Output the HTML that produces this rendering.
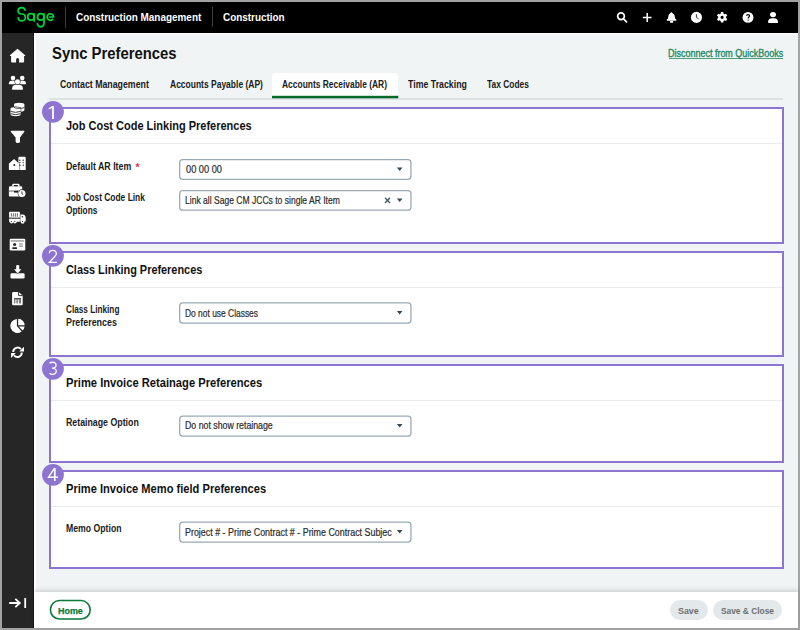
<!DOCTYPE html>
<html><head><meta charset="utf-8"><style>
*{margin:0;padding:0;box-sizing:border-box}
html,body{width:800px;height:630px;overflow:hidden;background:#a3a3a3;font-family:"Liberation Sans",sans-serif}
.t{position:absolute;white-space:nowrap;transform-origin:0 0}
.ic{position:absolute;overflow:visible}
#hdr{position:absolute;left:2px;top:2px;width:796px;height:31px;background:#000}
#side{position:absolute;left:2px;top:33px;width:32px;height:595px;background:#262626}
#main{position:absolute;left:34px;top:33px;width:764px;height:595px;background:#f0f4f4;border-left:2px solid #fff;border-top:1px solid #fff;box-shadow:inset 0 1px 0 #f8fafa}
.div{position:absolute;width:1px;background:#3d3d3d}
#tabline{position:absolute;left:49px;top:98px;width:734px;height:2px;background:#dde2e5}
#acttab{position:absolute;left:272px;top:73px;width:126px;height:25px;background:#fff;border-radius:3px 3px 0 0}
#actbar{position:absolute;left:272px;top:96px;width:126px;height:3px;background:#05692a}
.sec{position:absolute;left:49px;width:735px;background:#fff;border:2px solid #8d74d0}
.sep{position:absolute;left:51px;width:731px;height:1px;background:#e9edef}
.num{position:absolute;width:22px;height:22px;border-radius:50%;background:#8d74d0;color:#fff;font-size:16px;line-height:22px;text-align:center;font-weight:400}
.sel{position:absolute;left:179.4px;width:232.4px;background:#fff;border:1px solid #8d9da8;border-radius:3px}
#foot{position:absolute;left:34px;top:592px;width:764px;height:36px;background:#fff;box-shadow:0 -2px 4px rgba(0,0,0,0.14)}
.btn{position:absolute;border-radius:11px}
</style></head><body>
<div id="hdr"></div>
<div id="side"></div>
<div id="main"></div>
<div style="position:absolute;left:33px;top:33px;width:1px;height:595px;background:#161616"></div>
<div class="div" style="left:65px;top:7px;height:21px"></div>
<div class="div" style="left:212px;top:7px;height:20px"></div>
<div id="tabline"></div>
<div id="acttab"></div>
<svg class="ic" style="left:0;top:0" width="800" height="630"><rect x="272" y="95.8" width="126.3" height="2.5" fill="#05692a"/></svg>
<div style="position:absolute;left:668.8px;top:57.6px;width:114px;height:1px;background:#4f9f7c"></div>
<div class="sec" style="top:107px;height:137px"></div><div class="sep" style="top:143px"></div><svg class="ic" style="left:0;top:0" width="800" height="630"><g transform="translate(52.95,111.8)"><circle r="10.9" fill="#8d74d0"/><path fill="#fff" d="M0.95,-5.85 L0.95,7.15 L-0.85,7.15 L-0.85,-3.7 L-4.3,-2.2 L-4.3,-3.6 L-0.7,-5.85 Z"/></g></svg><div class="sec" style="top:251px;height:106px"></div><div class="sep" style="top:287px"></div><svg class="ic" style="left:0;top:0" width="800" height="630"><g transform="translate(52.95,255.8)"><circle r="10.9" fill="#8d74d0"/><path fill="none" stroke="#fff" stroke-width="1.3" d="M-3.6,-2.6 C-3.6,-4.4 -2.2,-5.35 -0.1,-5.35 C2.0,-5.35 3.4,-4.2 3.4,-2.4 C3.4,-0.9 2.6,0.2 1.2,1.5 L-3.6,6.55 H4.1"/></g></svg><div class="sec" style="top:364px;height:99px"></div><div class="sep" style="top:400px"></div><svg class="ic" style="left:0;top:0" width="800" height="630"><g transform="translate(52.95,368.8)"><circle r="10.9" fill="#8d74d0"/><path fill="none" stroke="#fff" stroke-width="1.3" d="M-3.5,-5.6 C-2.8,-6.3 -1.5,-6.55 -0.3,-6.55 C1.9,-6.55 3.1,-5.4 3.1,-3.6 C3.1,-1.7 1.6,-0.8 -0.8,-0.8 C1.9,-0.8 3.3,0.5 3.3,2.5 C3.3,4.5 1.8,5.55 -0.4,5.55 C-1.7,5.55 -2.9,5.1 -3.5,4.3"/></g></svg><div class="sec" style="top:470px;height:99px"></div><div class="sep" style="top:506px"></div><svg class="ic" style="left:0;top:0" width="800" height="630"><g transform="translate(52.95,474.8)"><circle r="10.9" fill="#8d74d0"/><path fill="none" stroke="#fff" stroke-width="1.4" d="M1.2,-6.1 L-4.4,2.4 H5"/><path fill="#fff" d="M1.0,-6.8 H2.7 V6.2 H1.0 Z"/></g></svg>
<svg class="ic" style="left:0;top:0" width="800" height="630"><rect x="179.70" y="159.65" width="231.25" height="19.70" rx="3" fill="#fff" stroke="#9aabb6" stroke-width="1.3"/><path d="M396.9,167.50 H402.5 L399.7,171.00 Z" fill="#2f4a59"/><rect x="179.70" y="190.65" width="231.25" height="19.50" rx="3" fill="#fff" stroke="#9aabb6" stroke-width="1.3"/><path d="M396.9,198.40 H402.5 L399.7,201.90 Z" fill="#2f4a59"/><path d="M385,197.80 L390,203.00 M390,197.80 L385,203.00" stroke="#34566b" stroke-width="1.25"/><rect x="179.70" y="302.95" width="231.25" height="20.10" rx="3" fill="#fff" stroke="#9aabb6" stroke-width="1.3"/><path d="M396.9,311.00 H402.5 L399.7,314.50 Z" fill="#2f4a59"/><rect x="179.70" y="416.15" width="231.25" height="19.90" rx="3" fill="#fff" stroke="#9aabb6" stroke-width="1.3"/><path d="M396.9,424.10 H402.5 L399.7,427.60 Z" fill="#2f4a59"/><rect x="179.70" y="522.15" width="231.25" height="19.90" rx="3" fill="#fff" stroke="#9aabb6" stroke-width="1.3"/><path d="M396.9,530.10 H402.5 L399.7,533.60 Z" fill="#2f4a59"/></svg>
<div id="foot"></div>
<svg class="ic" style="left:0;top:0" width="800" height="630"><rect x="50.4" y="600.55" width="39.8" height="18.5" rx="9.25" fill="none" stroke="#0a7a3a" stroke-width="1.6"/></svg>
<div class="btn" style="left:670.2px;top:600px;width:37.4px;height:20px;background:#e3e8eb"></div>
<div class="btn" style="left:713px;top:600px;width:69.2px;height:20px;background:#e3e8eb"></div>
<div class="t" style="left:135.4px;top:161.5px;font-size:10.5px;line-height:10px;color:#d33a4f;font-weight:700">*</div>
<div class="t" style="left:76.00px;top:12.30px;font-size:11px;line-height:11px;font-weight:700;color:#fff;transform:scaleX(0.9029);">Construction Management</div><div class="t" style="left:223.40px;top:12.30px;font-size:11px;line-height:11px;font-weight:700;color:#fff;transform:scaleX(0.9000);">Construction</div><div class="t" style="left:51.67px;top:46.00px;font-size:16px;line-height:16px;font-weight:700;color:#111;transform:scaleX(0.9278);">Sync Preferences</div><div class="t" style="left:60.25px;top:80.00px;font-size:10px;line-height:10px;font-weight:700;color:#1b1b1b;transform:scaleX(0.8787);">Contact Management</div><div class="t" style="left:169.70px;top:80.00px;font-size:10px;line-height:10px;font-weight:700;color:#1b1b1b;transform:scaleX(0.8486);">Accounts Payable (AP)</div><div class="t" style="left:282.40px;top:80.00px;font-size:10px;line-height:10px;font-weight:700;color:#1b1b1b;transform:scaleX(0.8435);">Accounts Receivable (AR)</div><div class="t" style="left:407.70px;top:80.00px;font-size:10px;line-height:10px;font-weight:700;color:#1b1b1b;transform:scaleX(0.8776);">Time Tracking</div><div class="t" style="left:486.80px;top:80.00px;font-size:10px;line-height:10px;font-weight:700;color:#1b1b1b;transform:scaleX(0.8400);">Tax Codes</div><div class="t" style="left:667.90px;top:48.50px;font-size:10px;line-height:10px;font-weight:400;color:#1f8a6a;transform:scaleX(0.8976);-webkit-text-stroke:0.35px #1f8a6a;">Disconnect from QuickBooks</div><div class="t" style="left:66.00px;top:120.20px;font-size:12px;line-height:12px;font-weight:700;color:#111;transform:scaleX(0.9158);">Job Cost Code Linking Preferences</div><div class="t" style="left:65.80px;top:264.30px;font-size:12px;line-height:12px;font-weight:700;color:#111;transform:scaleX(0.9080);">Class Linking Preferences</div><div class="t" style="left:65.77px;top:376.50px;font-size:12px;line-height:12px;font-weight:700;color:#111;transform:scaleX(0.9306);">Prime Invoice Retainage Preferences</div><div class="t" style="left:65.57px;top:482.90px;font-size:12px;line-height:12px;font-weight:700;color:#111;transform:scaleX(0.9260);">Prime Invoice Memo field Preferences</div><div class="t" style="left:65.62px;top:162.00px;font-size:10px;line-height:10px;font-weight:700;color:#1b1b1b;transform:scaleX(0.8808);">Default AR Item</div><div class="t" style="left:66.00px;top:192.80px;font-size:10px;line-height:10px;font-weight:700;color:#1b1b1b;transform:scaleX(0.8404);">Job Cost Code Link</div><div class="t" style="left:66.00px;top:205.70px;font-size:10px;line-height:10px;font-weight:700;color:#1b1b1b;transform:scaleX(0.8289);">Options</div><div class="t" style="left:66.00px;top:305.20px;font-size:10px;line-height:10px;font-weight:700;color:#1b1b1b;transform:scaleX(0.8215);">Class Linking</div><div class="t" style="left:65.61px;top:318.30px;font-size:10px;line-height:10px;font-weight:700;color:#1b1b1b;transform:scaleX(0.8875);">Preferences</div><div class="t" style="left:65.62px;top:418.30px;font-size:10px;line-height:10px;font-weight:700;color:#1b1b1b;transform:scaleX(0.8790);">Retainage Option</div><div class="t" style="left:65.63px;top:524.20px;font-size:10px;line-height:10px;font-weight:700;color:#1b1b1b;transform:scaleX(0.8694);">Memo Option</div><div class="t" style="left:185.60px;top:164.80px;font-size:10px;line-height:10px;font-weight:400;color:#2b2b2b;transform:scaleX(0.9231);-webkit-text-stroke:0.2px #2b2b2b;">00 00 00</div><div class="t" style="left:184.75px;top:195.80px;font-size:10px;line-height:10px;font-weight:400;color:#2b2b2b;transform:scaleX(0.8544);-webkit-text-stroke:0.2px #2b2b2b;">Link all Sage CM JCCs to single AR Item</div><div class="t" style="left:185.16px;top:308.90px;font-size:10px;line-height:10px;font-weight:400;color:#2b2b2b;transform:scaleX(0.8419);-webkit-text-stroke:0.2px #2b2b2b;">Do not use Classes</div><div class="t" style="left:185.12px;top:421.40px;font-size:10px;line-height:10px;font-weight:400;color:#2b2b2b;transform:scaleX(0.8768);-webkit-text-stroke:0.2px #2b2b2b;">Do not show retainage</div><div class="t" style="left:185.11px;top:528.00px;font-size:10px;line-height:10px;font-weight:400;color:#2b2b2b;transform:scaleX(0.8900);-webkit-text-stroke:0.2px #2b2b2b;">Project # - Prime Contract # - Prime Contract Subjec</div><div class="t" style="left:57.81px;top:605.80px;font-size:9.5px;line-height:9.5px;font-weight:700;color:#0a7a3a;transform:scaleX(0.9400);-webkit-text-stroke:0.25px #0a7a3a;">Home</div><div class="t" style="left:677.97px;top:606.00px;font-size:9.5px;line-height:9.5px;font-weight:700;color:#6f6f6f;transform:scaleX(0.9333);">Save</div><div class="t" style="left:720.72px;top:606.00px;font-size:9.5px;line-height:9.5px;font-weight:700;color:#6f6f6f;transform:scaleX(0.8797);">Save &amp; Close</div>

<svg style="position:absolute;left:0;top:0" width="800" height="630" viewBox="0 0 800 630">
<g fill="none" stroke="#00d639" stroke-width="1.7" stroke-linecap="round">
 <path d="M25.0,10.2 A3.45,3.2 0 1 0 21.6,14.0 A3.6,3.4 0 1 1 18.2,17.8"/>
 <circle cx="30.95" cy="16.95" r="3.25"/>
 <path d="M34.2,13.8 V20.9"/>
 <circle cx="40.75" cy="16.95" r="3.25"/>
 <path d="M44.0,13.8 V23.6 A3.3,3.3 0 0 1 37.4,23.6"/>
 <path d="M49.4,17 H53.6 A3.25,3.25 0 1 0 52.7,19.3"/>
</g>
<g fill="none" stroke="#fff" stroke-width="1.7" stroke-linecap="round">
 <circle cx="621" cy="16.25" r="3.35"/>
 <path d="M623.8,19.1 L626.5,21.8"/>
 <path d="M647.2,13 V21.9 M642.8,17.45 H651.6" stroke-width="1.5" stroke-linecap="butt"/>
</g>
<path fill="#fff" d="M671.4,11.9 L672.6,13.3 Q674.5,13.7 674.7,16 L675.1,18.4 L676.3,19.5 V20.7 H666.8 V19.5 L668,18.4 L668.4,16 Q668.6,13.7 670.2,13.3 Z M670.1,20.9 H673.1 V22.8 H670.1 Z"/>
<circle cx="696.45" cy="17.4" r="5.55" fill="#fff"/>
<path d="M696.4,14.2 V17.4 L698.6,18.9" fill="none" stroke="#2a2a2a" stroke-width="0.95"/>
<g transform="translate(722.1,17.35)">
 <path fill="#fff" fill-rule="evenodd" d="M-2.00,-3.46 L-1.30,-3.78 L-1.21,-5.26 L1.21,-5.26 L1.30,-3.78 L2.00,-3.46 L2.62,-3.02 L3.95,-3.68 L5.16,-1.58 L3.93,-0.76 L4.00,0.00 L3.93,0.76 L5.16,1.58 L3.95,3.68 L2.62,3.02 L2.00,3.46 L1.30,3.78 L1.21,5.26 L-1.21,5.26 L-1.30,3.78 L-2.00,3.46 L-2.62,3.02 L-3.95,3.68 L-5.16,1.58 L-3.93,0.76 L-4.00,-0.00 L-3.93,-0.76 L-5.16,-1.58 L-3.95,-3.68 L-2.62,-3.02 Z M1.6,0 A1.6,1.6 0 1 0 -1.6,0 A1.6,1.6 0 1 0 1.6,0 Z"/>
</g>
<circle cx="748" cy="17.4" r="5.45" fill="#fff"/>
<path d="M746.5,15.8 C746.5,14.3 749.6,14.3 749.6,15.8 C749.6,17 748.1,17 748.1,18.5" fill="none" stroke="#000" stroke-width="1.15"/>
<circle cx="748.1" cy="20.1" r="0.65" fill="#000"/>
<ellipse cx="773" cy="14.6" rx="3" ry="2.65" fill="#fff"/>
<path fill="#fff" d="M768.2,22.9 V21.2 C768.2,19.3 770,18.2 772,18.2 H774 C776,18.2 777.9,19.3 777.9,21.2 V22.9 Z"/>

<g fill="#fff" stroke="#262626" stroke-width="1" paint-order="stroke">
 <!-- home -->
 <path stroke="none" d="M17.5,48.7 L25.2,55.2 Q25.6,55.9 24.8,56 H24.1 V61.5 Q24.1,62.5 23.1,62.5 H19.1 V59.5 A1.45,1.45 0 0 0 16.1,59.5 V62.5 H12.1 Q11.1,62.5 11.1,61.5 V56 H10.3 Q9.5,55.9 9.9,55.2 Z"/>
 <!-- people -->
 <circle stroke="none" cx="13" cy="78.1" r="2.3"/>
 <circle stroke="none" cx="22.2" cy="78.1" r="2.3"/>
 <path stroke="none" d="M8.9,84.3 V83.2 C8.9,81.6 10.2,80.8 11.8,80.8 H14.4 C15.4,80.8 16,81.2 16.2,81.6 L15.6,84.3 Z"/>
 <path stroke="none" d="M26,84.3 V83.2 C26,81.6 24.7,80.8 23.1,80.8 H20.6 C19.6,80.8 19,81.2 18.8,81.6 L19.4,84.3 Z"/>
 <circle cx="17.5" cy="81.7" r="2.5" stroke-width="1.1"/>
 <path stroke-width="1.1" d="M12.1,89.7 V88.2 C12.1,86 13.8,84.7 15.8,84.7 H19.2 C21.2,84.7 22.9,86 22.9,88.2 V89.7 Z"/>
 <!-- coins -->
 <path stroke="none" d="M14,104.6 A5.2,1.8 0 0 1 24.4,104.6 V109.9 A5.2,1.8 0 0 1 14,109.9 Z"/>
 <path stroke-width="1.1" d="M10.5,108.9 A5.1,1.9 0 0 1 20.7,108.9 V114.3 A5.1,1.9 0 0 1 10.5,114.3 Z"/>
 <!-- funnel -->
 <path stroke="none" d="M11.2,130.8 H23.9 Q24.8,130.9 24.3,131.7 L20,137.6 V141.7 Q20,142.4 19.3,142.7 L17.2,143 Q15.6,142.8 15.6,141.3 V137.6 L10.8,131.7 Q10.3,130.9 11.2,130.8 Z"/>
 <!-- buildings -->
 <path stroke="none" d="M18.4,157.8 Q18.4,156.8 19.6,156.8 H24.7 Q25.7,156.8 25.7,157.8 V170.1 H18.4 Z"/>
 <path stroke-width="0.8" d="M8.9,163.6 L14.1,158.9 L19.1,163.4 V170.1 H8.9 Z"/>
 <!-- briefcase -->
 <path stroke="none" d="M12.2,186.4 V184.9 Q12.2,183.7 13.4,183.7 H18.3 Q19.5,183.7 19.5,184.9 V186.4 Z"/>
 <path stroke="none" d="M10.1,186.2 H21 Q22.2,186.2 22.2,187.4 V195.4 Q22.2,196.6 21,196.6 H10.1 Q8.9,196.6 8.9,195.4 V187.4 Q8.9,186.2 10.1,186.2 Z"/>
 <circle cx="21.9" cy="193.5" r="3.6" stroke-width="1.2"/>
 <!-- truck -->
 <path stroke="none" d="M9.9,211.8 H19.1 Q19.9,211.8 19.9,212.6 V217.8 H9.1 V212.6 Q9.1,211.8 9.9,211.8 Z"/>
 <path stroke="none" d="M9.1,218.6 H20.3 V221.8 H9.1 Z"/>
 <path stroke-width="0.8" d="M20.3,214.6 H22.6 Q25.7,214.8 25.7,218.5 V221.6 H20.3 Z"/>
 <circle stroke="none" cx="11.5" cy="221.8" r="1.8"/>
 <circle stroke="none" cx="14.9" cy="221.8" r="1.8"/>
 <circle stroke="none" cx="22.6" cy="221.8" r="1.9"/>
 <!-- id card -->
 <path stroke="none" d="M10.9,238.65 H24.05 Q25.25,238.65 25.25,239.85 V249.35 Q25.25,250.55 24.05,250.55 H10.9 Q9.7,250.55 9.7,249.35 V239.85 Q9.7,238.65 10.9,238.65 Z"/>
 <!-- download -->
 <path stroke="none" d="M10.5,274.5 Q10.5,273.2 11.8,273.2 H23.3 Q24.6,273.2 24.6,274.5 V277.2 Q24.6,278.5 23.3,278.5 H11.8 Q10.5,278.5 10.5,277.2 Z"/>
 <path stroke-width="1.1" d="M16.2,265.6 Q16.2,264.9 17.7,264.9 Q19.2,264.9 19.2,265.6 V269.3 H21.4 L17.7,273.4 L14,269.3 H16.2 Z"/>
 <!-- file -->
 <path stroke="none" d="M13.1,291.9 H18.6 L22.7,295.6 V304.3 Q22.7,305.3 21.7,305.3 H13.1 Q12.1,305.3 12.1,304.3 V292.9 Q12.1,291.9 13.1,291.9 Z"/>
 <!-- pie -->
 <path stroke="none" d="M16.9,318.9 V325.9 L21.6,331.4 A7,7 0 1 1 16.9,318.9 Z"/>
 <path stroke="none" d="M18.2,318.7 A7,7 0 0 1 24.7,325.3 H18.2 Z"/>
 <path stroke="none" d="M18.8,326.6 H24.6 A7,7 0 0 1 22.6,330.6 Z"/>
</g>
<g fill="#262626">
 <rect x="13.8" y="185" width="4.1" height="1.3"/>
 <rect x="8.9" y="190.4" width="11" height="1.3" fill="#8a8a8a"/>
 <rect x="14" y="190.8" width="4" height="1.8"/>
 <circle cx="14.3" cy="165.1" r="1"/>
 <circle cx="19.9" cy="160.3" r="0.7"/><circle cx="23.2" cy="160.3" r="0.7"/>
 <circle cx="19.9" cy="162.6" r="0.7"/><circle cx="23.2" cy="162.6" r="0.7"/>
 <circle cx="19.9" cy="165.2" r="0.7"/><circle cx="23.2" cy="165.2" r="0.7"/>
 <rect x="10.9" y="213.3" width="0.7" height="3.4"/><rect x="12.9" y="213.3" width="0.7" height="3.4"/><rect x="14.9" y="213.3" width="0.7" height="3.4"/><rect x="16.9" y="213.3" width="0.7" height="3.4"/>
 <rect x="9.1" y="217.8" width="11" height="0.8" fill="#555"/>
 <circle cx="22.4" cy="216.7" r="0.8"/>
 <circle cx="11.5" cy="221.6" r="0.6"/><circle cx="14.9" cy="221.6" r="0.6"/><circle cx="22.6" cy="221.5" r="0.6"/>
 <rect x="10.7" y="240.1" width="13.5" height="1.7" fill="#a8a8a8"/>
 <circle cx="14.6" cy="244.5" r="1.5"/>
 <rect x="12.2" y="247.2" width="4.9" height="1.7" rx="0.6"/>
 <rect x="19.1" y="243.3" width="3.7" height="3.6" fill="#9a9a9a"/>
 <rect x="19.1" y="244.4" width="3.7" height="1.3" fill="#e0e0e0"/>
 <rect x="14.1" y="298.2" width="6.9" height="1.1"/>
 <rect x="14.1" y="299.2" width="0.6" height="4.2"/><rect x="15.8" y="299.2" width="0.6" height="4.2"/><rect x="17.5" y="299.2" width="0.6" height="4.2"/><rect x="19.2" y="299.2" width="0.6" height="4.2"/><rect x="20.4" y="299.2" width="0.6" height="4.2"/>
</g>
<g fill="none" stroke="#262626" stroke-width="0.9">
 <path d="M14,107.1 A5.2,1.2 0 0 0 24.4,107.1"/>
 <path d="M10.5,111.4 Q15.6,113.3 20.7,111.4 M10.5,113.7 Q15.6,115.6 20.7,113.7"/>
 <path d="M21.9,191.4 V193.6 L23.2,194.6"/>
 <path d="M18.6,291.9 V295.6 H22.7"/>
</g>
<g fill="none" stroke="#fff" stroke-width="1.9">
 <path d="M13.2,352 A4.4,4.4 0 0 1 21,349.2"/>
 <path d="M21.8,352.6 A4.4,4.4 0 0 1 14,355.4"/>
</g>
<path fill="#fff" d="M24,346.8 V351.5 H19.3 Z M11.1,357.9 V353.1 H15.8 Z"/>
<g fill="none" stroke="#fff" stroke-width="1.8">
 <path d="M9.2,603 H19.5 M15.3,598.9 L19.8,603 L15.3,607.1"/>
 <path d="M25.2,598 V608"/>
</g>
</svg>

</body></html>
